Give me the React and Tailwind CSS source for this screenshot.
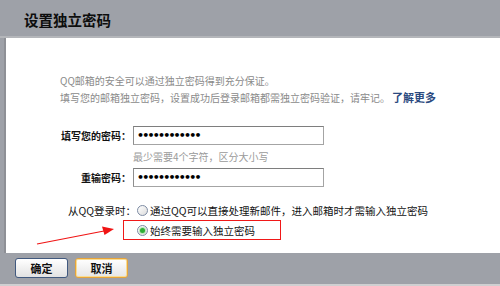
import React from "react";

const font = { fontFamily: '"Noto Sans CJK SC", "Liberation Sans", sans-serif' };

function PasswordBox() {
  return (
    <div className="w-[191px] h-[19px] border border-[#a4a4a4] border-t-[#7e7e7e] border-l-[#8e8e8e] bg-white flex items-center pl-[3px]">
      <span className="text-[11px] leading-none font-bold tracking-[-1.8px] text-black" style={{ fontFamily: '"DejaVu Sans", sans-serif' }}>
        ••••••••••••
      </span>
    </div>
  );
}

function Radio({ checked }) {
  return (
    <div className="w-[11px] h-[11px] rounded-full border border-[#7d8ba3] bg-gradient-to-br from-white to-[#dcdcdc] flex items-center justify-center shrink-0">
      {checked && <div className="w-[5px] h-[5px] rounded-full bg-[#2fae36] ring-1 ring-[#b9e6b9]" />}
    </div>
  );
}

export default function App() {
  return (
    <div className="relative w-[500px] h-[286px] bg-[#9ea1a8] flex flex-col overflow-hidden" style={font}>
      {/* header */}
      <div className="h-[38px] shrink-0 pl-[24px] flex items-center border-b-2 border-[#b4b6ba]">
        <h1 className="text-[14.5px] leading-none font-bold text-[#0d0d0d] mt-[4px]">设置独立密码</h1>
      </div>

      {/* body */}
      <div className="pl-[4px] shrink-0">
        <div className="h-[215px] bg-white border-l-2 border-[#8e9096] pl-[54px] pt-[34px]">
          <p className="text-[10px] leading-[17px] text-[#8a8a8a]">QQ邮箱的安全可以通过独立密码得到充分保证。</p>
          <p className="text-[10px] leading-[17px] text-[#8a8a8a]">
            填写您的邮箱独立密码，设置成功后登录邮箱都需独立密码验证，请牢记。
            <a className="ml-[2px] text-[11px] font-bold text-[#2b4a80]">了解更多</a>
          </p>

          <div className="-ml-[54px] mt-[20px]">
            <div className="flex items-center">
              <label className="w-[125px] text-right text-[10px] leading-[19px] text-[#111] font-bold">填写您的密码：</label>
              <div className="ml-[2px]">
                <PasswordBox />
              </div>
            </div>
            <div className="pl-[127px] mt-[5px] text-[10px] leading-[14px] text-[#9a9a9a]">最少需要4个字符，区分大小写</div>
            <div className="flex items-center mt-[4px]">
              <label className="w-[125px] text-right text-[10px] leading-[19px] text-[#111] font-bold">重输密码：</label>
              <div className="ml-[2px]">
                <PasswordBox />
              </div>
            </div>

            <div className="flex items-center mt-[15px]">
              <label className="w-[130px] text-right text-[10.5px] leading-[17px] text-[#111]">从QQ登录时：</label>
              <div className="ml-[1px] flex items-center gap-[2px]">
                <Radio />
                <span className="text-[10.5px] leading-[17px] text-[#111]">通过QQ可以直接处理新邮件，进入邮箱时才需输入独立密码</span>
              </div>
            </div>
            <div className="ml-[117px] mt-[1px] w-[158px] h-[20px] border border-[#f01818] pl-[13px] flex items-center gap-[2px]">
              <Radio checked />
              <span className="text-[10.5px] leading-[17px] text-[#111]">始终需要输入独立密码</span>
            </div>
          </div>
        </div>
      </div>

      {/* footer */}
      <div className="flex-1 flex flex-col">
        <div className="flex-1 flex items-start gap-[7px] pl-[15px] pt-[5px]">
          <button className="w-[53px] h-[20px] rounded-[3px] border border-[#41597f] bg-gradient-to-b from-white to-[#e2e2e2] text-[11px] leading-none font-bold text-[#111]">
            确定
          </button>
          <button className="w-[53px] h-[20px] rounded-[3px] border border-[#e7a43a] shadow-[inset_0_0_0_1px_#f9dd92] bg-gradient-to-b from-white to-[#e6e6e6] text-[11px] leading-none font-bold text-[#111]">
            取消
          </button>
        </div>
        <div className="h-[2px] bg-[#cfcfd1]" />
      </div>

      {/* red annotation arrow */}
      <svg className="absolute left-0 top-0 pointer-events-none" width="500" height="286">
        <line x1="37" y1="244" x2="104" y2="231" stroke="#f01414" strokeWidth="1.2" />
        <polygon points="114,229 102,226.5 104.5,235" fill="#f01414" />
      </svg>
    </div>
  );
}
